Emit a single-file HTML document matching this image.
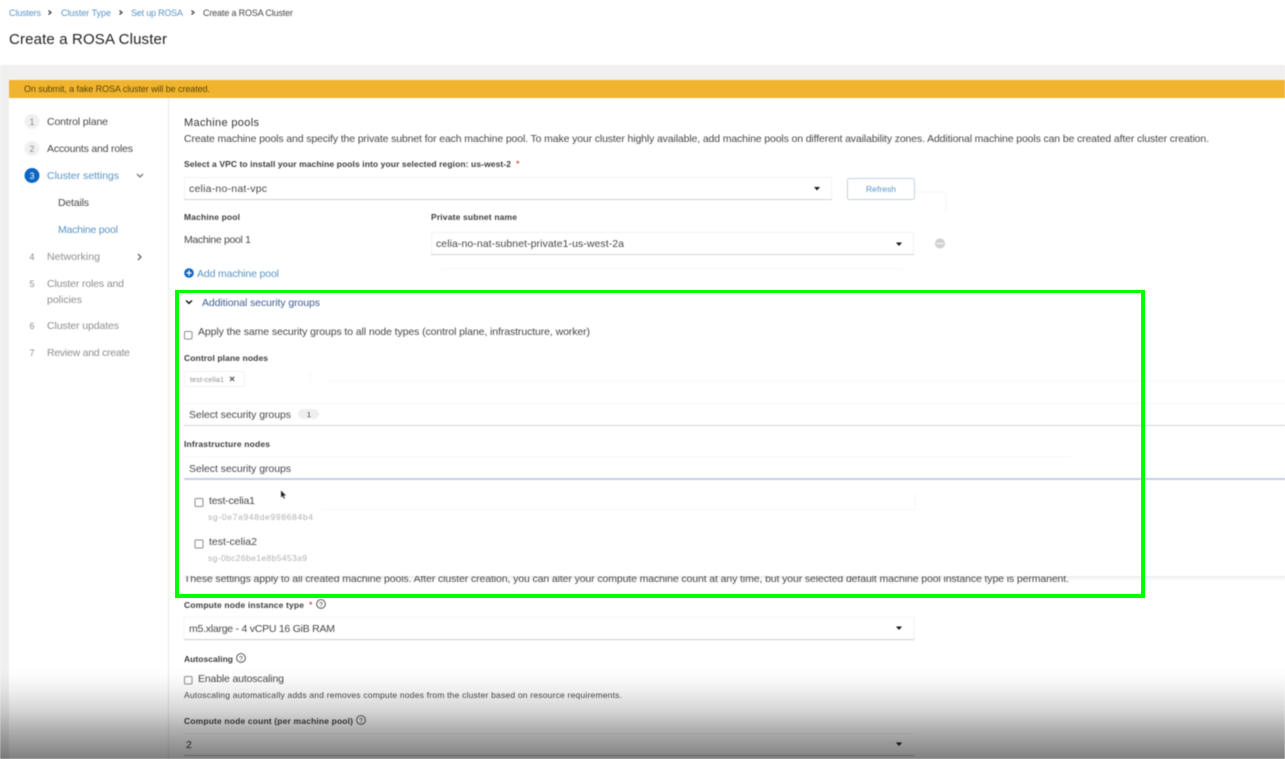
<!DOCTYPE html>
<html lang="en">
<head>
<meta charset="utf-8">
<title>Create a ROSA Cluster</title>
<style>
html,body{margin:0;padding:0;width:1285px;height:759px;overflow:hidden;background:#fff}
svg{display:block;filter:blur(.5px)}
text{font-family:"Liberation Sans",sans-serif;font-size:10.5px;fill:#484848;white-space:pre}
.b{font-weight:700;font-size:8.5px;fill:#3c3c3c}
.l{fill:#5a94c6}
.g{fill:#8e8e8e}
.n{font-size:9px;fill:#8a8a8a;text-anchor:middle}
.s{font-size:8.5px}
.sg{font-size:8.5px;fill:#b0b0b0}
#annot{position:absolute;left:175px;top:290px;width:962px;height:301px;border:4px solid #00ff00;border-top-width:3px}
</style>
</head>
<body>
<svg width="1285" height="759" viewBox="0 0 1285 759" xmlns="http://www.w3.org/2000/svg">
<defs>
<linearGradient id="fade" x1="0" y1="0" x2="0" y2="1">
<stop offset="0" stop-color="#000" stop-opacity="0"/>
<stop offset=".1" stop-color="#000" stop-opacity=".008"/>
<stop offset=".27" stop-color="#000" stop-opacity=".06"/>
<stop offset=".48" stop-color="#000" stop-opacity=".16"/>
<stop offset=".69" stop-color="#000" stop-opacity=".31"/>
<stop offset=".85" stop-color="#000" stop-opacity=".41"/>
<stop offset="1" stop-color="#000" stop-opacity=".5"/>
</linearGradient>
<linearGradient id="sh" x1="0" y1="0" x2="0" y2="1">
<stop offset="0" stop-color="#000" stop-opacity=".07"/>
<stop offset="1" stop-color="#000" stop-opacity="0"/>
</linearGradient>
</defs>

<!-- page frame -->
<rect width="1285" height="759" fill="#fff"/>
<rect y="65" width="1285" height="15" fill="#f0f0f0"/>
<rect y="65" width="9" height="694" fill="#f0f0f0"/>
<rect x="9" y="80" width="1276" height="18" fill="#f0b42e"/>
<rect x="168" y="98" width="1" height="661" fill="#e8e8e8"/>

<!-- breadcrumb -->
<text x="9" y="16" style="font-size:9px" class="l" textLength="32">Clusters</text>
<path d="M48.500 10.500l2.500 2-2.500 2M119.500 10.500l2.500 2-2.500 2M191.500 10.500l2.500 2-2.500 2" fill="none" stroke="#333" stroke-width="1.200"/>
<text x="61" y="16" style="font-size:9px" class="l" textLength="50">Cluster Type</text>
<text x="131" y="16" style="font-size:9px" class="l" textLength="52">Set up ROSA</text>
<text x="203" y="16" style="font-size:9px" textLength="90">Create a ROSA Cluster</text>
<text x="9" y="44" style="font-size:15px;fill:#1f1f1f" textLength="158">Create a ROSA Cluster</text>

<!-- banner -->
<text x="24" y="92" style="font-size:9px;fill:#5c4708" textLength="186">On submit, a fake ROSA cluster will be created.</text>

<!-- sidebar -->
<circle cx="32" cy="121.500" r="7.500" fill="#f0f0f0"/>
<circle cx="32" cy="148.500" r="7.500" fill="#f0f0f0"/>
<circle cx="32" cy="175.500" r="7.500" fill="#0b66c3"/>
<text x="32" y="125" class="n">1</text>
<text x="32" y="152" class="n">2</text>
<text x="32" y="179" class="n" style="fill:#fff">3</text>
<text x="32" y="260" class="n">4</text>
<text x="32" y="287" class="n">5</text>
<text x="32" y="329" class="n">6</text>
<text x="32" y="356" class="n">7</text>
<text x="47" y="125" textLength="61">Control plane</text>
<text x="47" y="152" textLength="86">Accounts and roles</text>
<text x="47" y="179" class="l" textLength="72">Cluster settings</text>
<path d="M137 174l3 3 3-3" fill="none" stroke="#777" stroke-width="1.300"/>
<text x="58" y="206" textLength="31">Details</text>
<text x="58" y="233" class="l" textLength="60">Machine pool</text>
<text x="47" y="260" class="g" textLength="53">Networking</text>
<path d="M138 254l3 3-3 3" fill="none" stroke="#666" stroke-width="1.300"/>
<text x="47" y="287" class="g" textLength="77">Cluster roles and</text>
<text x="47" y="303" class="g" textLength="35">policies</text>
<text x="47" y="329" class="g" textLength="72">Cluster updates</text>
<text x="47" y="356" class="g" textLength="83">Review and create</text>

<!-- machine pools -->
<text x="184" y="126" style="font-size:11px;fill:#333" textLength="75">Machine pools</text>
<text x="184" y="142" textLength="1025">Create machine pools and specify the private subnet for each machine pool. To make your cluster highly available, add machine pools on different availability zones. Additional machine pools can be created after cluster creation.</text>
<text x="184" y="167" class="b" textLength="327">Select a VPC to install your machine pools into your selected region: us-west-2</text>
<text x="516" y="167" style="font-size:9px;fill:#c9190b">*</text>

<rect x="184.500" y="177.500" width="647" height="22" fill="#fff" stroke="#f3f3f3"/>
<rect x="184" y="199" width="648" height="1" fill="#d2d2d2"/>
<text x="189" y="192" textLength="78">celia-no-nat-vpc</text>
<path d="M814 187h6l-3 3.500z" fill="#151515"/>
<rect x="847.500" y="178.500" width="67" height="21" rx="2" fill="#fff" stroke="#c4cfe2"/>
<text x="866" y="192" class="l" style="font-size:8.500px" textLength="30">Refresh</text>
<path d="M915 192h31v20" fill="none" stroke="#f6f6f6"/>

<text x="184" y="220" class="b" textLength="56">Machine pool</text>
<text x="431" y="220" class="b" textLength="86">Private subnet name</text>
<text x="184" y="243" textLength="67">Machine pool 1</text>
<rect x="431.500" y="232.500" width="482" height="22" fill="#fff" stroke="#f3f3f3"/>
<rect x="431" y="254" width="483" height="1" fill="#d2d2d2"/>
<text x="436" y="247" textLength="188">celia-no-nat-subnet-private1-us-west-2a</text>
<path d="M896 242.500h6l-3 3.500z" fill="#151515"/>
<circle cx="940" cy="243.500" r="5" fill="#cfcfcf"/>
<rect x="936.500" y="242.800" width="7" height="1.500" fill="#f4f4f4"/>

<circle cx="189" cy="273" r="4.800" fill="#0b66c3"/>
<path d="M186.300 273h5.400M189 270.300v5.400" stroke="#fff" stroke-width="1.300"/>
<text x="197" y="277" class="l" textLength="82">Add machine pool</text>
<path d="M441 268.500h462" stroke="#f7f7f7"/>

<!-- additional security groups -->
<path d="M186 300.500l3 2.800 3-2.800" fill="none" stroke="#151515" stroke-width="1.500"/>
<text x="202" y="306" style="fill:#3d5f90" textLength="118">Additional security groups</text>
<rect x="184.500" y="331.500" width="7.500" height="7.500" rx="1" fill="#fff" stroke="#8a8d90"/>
<text x="198" y="335" textLength="392">Apply the same security groups to all node types (control plane, infrastructure, worker)</text>
<text x="184" y="361" class="b" textLength="84">Control plane nodes</text>
<rect x="184.500" y="371.500" width="60" height="15" rx="1" fill="#fff" stroke="#f1f1f1"/>
<text x="190" y="382" style="font-size:7px;fill:#8a8a8a" textLength="34">test-celia1</text>
<path d="M230 376.800l4.200 4.200M234.200 376.800l-4.200 4.200" stroke="#555" stroke-width="1.200"/>
<path d="M310 372v10M326 381h959" stroke="#f8f8f8"/>

<rect x="184" y="403" width="1101" height="1" fill="#f5f5f5"/>
<rect x="184" y="425" width="1101" height="1" fill="#d6d6d6"/>
<text x="189" y="418" textLength="102">Select security groups</text>
<rect x="298" y="409" width="21" height="10" rx="5" fill="#efefef"/>
<text x="309" y="417" style="font-size:7.500px;fill:#333" text-anchor="middle">1</text>

<text x="184" y="447" class="b" textLength="86">Infrastructure nodes</text>
<rect x="184" y="456" width="886" height="1" fill="#f6f6f6"/>
<text x="189" y="472" textLength="102">Select security groups</text>

<!-- footer text sits under the dropdown edge -->
<text x="184" y="582" textLength="885">These settings apply to all created machine pools. After cluster creation, you can alter your compute machine count at any time, but your selected default machine pool instance type is permanent.</text>

<!-- dropdown -->
<rect x="184" y="480" width="1101" height="96" fill="#fff"/>
<rect x="184" y="576" width="1101" height="5" fill="url(#sh)"/>
<rect x="184" y="478" width="1101" height="2" fill="#c5cee6"/>
<path d="M322 509.500h593V493" fill="none" stroke="#f6f6f6"/>
<rect x="195" y="498.500" width="8" height="8" rx="1" fill="#fff" stroke="#8a8d90"/>
<text x="209" y="504" textLength="46">test-celia1</text>
<text x="208" y="520" class="sg" textLength="105">sg-0e7a948de998684b4</text>
<rect x="195" y="540" width="8" height="8" rx="1" fill="#fff" stroke="#8a8d90"/>
<text x="209" y="545" textLength="48">test-celia2</text>
<text x="208" y="561" class="sg" textLength="99">sg-0bc26be1e8b5453a9</text>
<path d="M281 490.500v7l1.700-1.600 1.200 2.800 1-.5-1.200-2.700h2.300z" fill="#222"/>

<!-- compute -->
<text x="184" y="608" class="b" textLength="120">Compute node instance type</text>
<text x="309" y="608" style="font-size:9px;fill:#c9190b">*</text>
<circle cx="321" cy="604" r="4.400" fill="none" stroke="#444" stroke-width=".9"/>
<text x="321" y="606.800" style="font-size:7px;fill:#444" text-anchor="middle">?</text>

<rect x="184" y="617" width="730" height="23" fill="#fff" stroke="#f5f5f5"/>
<rect x="184" y="639" width="730" height="1" fill="#d2d2d2"/>
<text x="189" y="632" textLength="146">m5.xlarge - 4 vCPU 16 GiB RAM</text>
<path d="M896 626.500h6l-3 3.500z" fill="#151515"/>

<text x="184" y="662" class="b" textLength="49">Autoscaling</text>
<circle cx="241" cy="658" r="4.400" fill="none" stroke="#444" stroke-width=".9"/>
<text x="241" y="660.800" style="font-size:7px;fill:#444" text-anchor="middle">?</text>
<rect x="184.500" y="676.500" width="7.500" height="7.500" rx="1" fill="#fff" stroke="#8a8d90"/>
<text x="198" y="682" textLength="86">Enable autoscaling</text>
<text x="184" y="698" class="s" textLength="438">Autoscaling automatically adds and removes compute nodes from the cluster based on resource requirements.</text>
<text x="184" y="724" class="b" textLength="169">Compute node count (per machine pool)</text>
<circle cx="361" cy="720" r="4.400" fill="none" stroke="#444" stroke-width=".9"/>
<text x="361" y="722.800" style="font-size:7px;fill:#444" text-anchor="middle">?</text>
<rect x="184" y="733" width="730" height="1" fill="#f2f2f2"/>
<rect x="184" y="755" width="730" height="1" fill="#bdbdbd"/>
<text x="186" y="748" style="fill:#333" textLength="5">2</text>
<path d="M896 742.500h6l-3 3.500z" fill="#151515"/>

<!-- bottom fade -->
<rect y="665" width="1285" height="94" fill="url(#fade)"/>
</svg>
<div id="annot"></div>
</body>
</html>
